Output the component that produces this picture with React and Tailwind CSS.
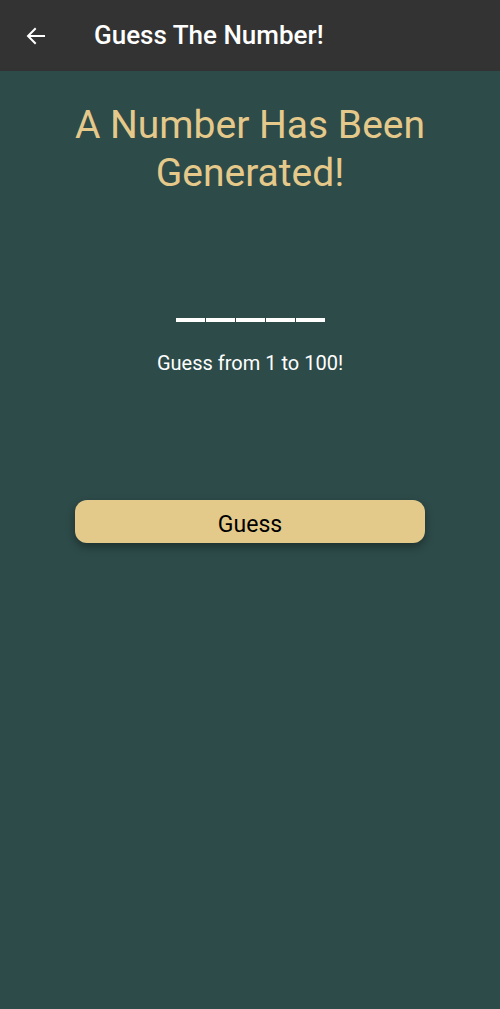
import React from "react";

const App = () => {
  return (
    <div className="min-h-[1009px] w-[500px] bg-[#2d4b49] font-['Roboto',sans-serif]">
      {/* Header */}
      <header className="h-[71px] bg-[#333333] flex items-center">
        <div className="w-[72px] flex justify-center">
          <svg width="24" height="24" viewBox="0 0 24 24" fill="none" stroke="white" strokeWidth="2" strokeLinecap="square">
            <path d="M20 12H5" />
            <path d="M11 5l-7 7 7 7" />
          </svg>
        </div>
        <h1 className="ml-[22px] text-white text-[26px] font-medium">Guess The Number!</h1>
      </header>

      {/* Content */}
      <div className="flex flex-col items-center">
        <h2 className="mt-[30px] text-[#e5c98b] text-[39px] leading-[48px] text-center px-6">
          A Number Has Been Generated!
        </h2>

        <div className="mt-[121px] flex gap-[1px]">
          <div className="w-[29px] h-[4px] bg-white" />
          <div className="w-[29px] h-[4px] bg-white" />
          <div className="w-[29px] h-[4px] bg-white" />
          <div className="w-[29px] h-[4px] bg-white" />
          <div className="w-[29px] h-[4px] bg-white" />
        </div>

        <p className="mt-[29px] text-white text-[20px] leading-[24px]">Guess from 1 to 100!</p>

        <button className="mt-[125px] w-[350px] h-[43px] pt-[5px] rounded-[12px] bg-[#e3c98a] text-black text-[23px] leading-[27px] shadow-[0_4px_8px_rgba(0,0,0,0.35)]">
          Guess
        </button>
      </div>
    </div>
  );
};

export default App;
